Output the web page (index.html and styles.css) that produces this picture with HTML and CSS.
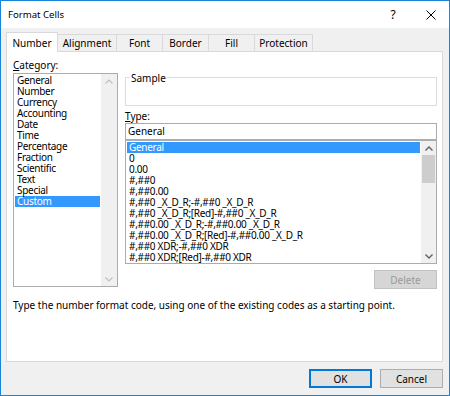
FILE: index.html
```html
<!DOCTYPE html>
<html>
<head>
<meta charset="utf-8">
<link rel="stylesheet" href="styles.css">
</head>
<body>
<div class="window">
  <div class="titlebar">
    <span class="title">Format Cells</span>
    <span class="help">?</span>
    <span class="close"><svg width="10" height="10" viewBox="0 0 10 10"><path d="M0.5 0.5L9.5 9.5M9.5 0.5L0.5 9.5" stroke="#000" stroke-width="1" fill="none"/></svg></span>
  </div>
  <div class="tabs">
    <div class="tab active tab-number">Number</div>
    <div class="tab tab-alignment">Alignment</div>
    <div class="tab">Font</div>
    <div class="tab">Border</div>
    <div class="tab">Fill</div>
    <div class="tab tab-protection">Protection</div>
  </div>
  <div class="panel">
    <div class="columns">
      <div class="left">
        <div class="label"><u>C</u>ategory:</div>
        <div class="listbox cat">
          <div class="items">
            <div class="item">General</div>
            <div class="item">Number</div>
            <div class="item">Currency</div>
            <div class="item">Accounting</div>
            <div class="item">Date</div>
            <div class="item">Time</div>
            <div class="item">Percentage</div>
            <div class="item">Fraction</div>
            <div class="item">Scientific</div>
            <div class="item">Text</div>
            <div class="item">Special</div>
            <div class="item sel">Custom</div>
          </div>
          <div class="scrollbar disabled">
            <div class="sb-btn"><svg width="8" height="5" viewBox="0 0 8 5"><path d="M0.5 4.5L4 1L7.5 4.5" fill="none" stroke="currentColor" stroke-width="1.2"/></svg></div>
            <div class="sb-track"></div>
            <div class="sb-btn"><svg width="8" height="5" viewBox="0 0 8 5"><path d="M0.5 0.5L4 4L7.5 0.5" fill="none" stroke="currentColor" stroke-width="1.2"/></svg></div>
          </div>
        </div>
      </div>
      <div class="right">
        <div class="sample"><span class="legend">Sample</span></div>
        <div class="label type-label"><u>T</u>ype:</div>
        <div class="input">General</div>
        <div class="listbox types">
          <div class="items">
            <div class="item sel">General</div>
            <div class="item">0</div>
            <div class="item">0.00</div>
            <div class="item">#,##0</div>
            <div class="item">#,##0.00</div>
            <div class="item">#,##0 _X_D_R;-#,##0 _X_D_R</div>
            <div class="item">#,##0 _X_D_R;[Red]-#,##0 _X_D_R</div>
            <div class="item">#,##0.00 _X_D_R;-#,##0.00 _X_D_R</div>
            <div class="item">#,##0.00 _X_D_R;[Red]-#,##0.00 _X_D_R</div>
            <div class="item">#,##0 XDR;-#,##0 XDR</div>
            <div class="item">#,##0 XDR;[Red]-#,##0 XDR</div>
          </div>
          <div class="scrollbar">
            <div class="sb-btn"><svg width="8" height="5" viewBox="0 0 8 5"><path d="M0.5 4.5L4 1L7.5 4.5" fill="none" stroke="currentColor" stroke-width="1.4"/></svg></div>
            <div class="sb-track"><div class="sb-thumb"></div></div>
            <div class="sb-btn"><svg width="8" height="5" viewBox="0 0 8 5"><path d="M0.5 0.5L4 4L7.5 0.5" fill="none" stroke="currentColor" stroke-width="1.4"/></svg></div>
          </div>
        </div>
        <div class="actions"><button class="btn" disabled>Delete</button></div>
      </div>
    </div>
    <p class="desc">Type the number format code, using one of the existing codes as a starting point.</p>
  </div>
  <div class="footer">
    <button class="btn default">OK</button>
    <button class="btn">Cancel</button>
  </div>
</div>
</body>
</html>
```

FILE: styles.css
```css
* { box-sizing: border-box; }
html, body { margin: 0; padding: 0; background: #fff; }
body {
  font-family: "Noto Sans", "Open Sans", sans-serif;
  font-size: 10px;
  color: #000;
}
.window {
  width: 450px;
  height: 396px;
  border: 1px solid #1883d7;
  background: #f0f0f0;
  display: flex;
  flex-direction: column;
}
.titlebar {
  height: 27px;
  background: #fff;
  display: flex;
  align-items: center;
  padding-left: 7px;
}
.title { font-size: 9.6px; flex: 1; }
.help { width: 10px; text-align: center; font-size: 12px; margin-right: 28px; }
.close { width: 10px; height: 10px; margin-right: 13px; display: flex; }
.tabs {
  height: 23px;
  display: flex;
  align-items: flex-end;
  padding-left: 5px;
}
.tab {
  width: 47px;
  height: 17px;
  border: 1px solid #d9d9d9;
  border-bottom: none;
  margin-left: -1px;
  background: #f0f0f0;
  display: flex;
  align-items: center;
  justify-content: center;
  line-height: 1;
  white-space: nowrap;
}
.tab:first-child { margin-left: 0; }
.tab-number { width: 52px; }
.tab-alignment { width: 60px; }
.tab-protection { width: 59px; }
.tab.active {
  height: 20px;
  margin-bottom: -1px;
  background: #fff;
  position: relative;
  z-index: 1;
}
.panel {
  margin: 0 6px 0 5px;
  height: 311px;
  background: #fff;
  border: 1px solid #d9d9d9;
  padding: 7px 5px 0 6px;
}
.columns { display: flex; gap: 7px; }
.left { width: 105px; display: flex; flex-direction: column; }
.right { width: 312px; display: flex; flex-direction: column; }
.label { line-height: 13px; height: 13px; margin-bottom: 1px; }
.listbox {
  border: 1px solid #acacac;
  display: flex;
  background: #fff;
}
.listbox.cat { height: 214px; }
.listbox.types { height: 124px; }
.items { flex: 1; padding: 1px; min-width: 0; }
.item {
  height: 11px;
  line-height: 11px;
  padding-left: 2px;
  white-space: nowrap;
  letter-spacing: -0.3px;
}
.item.sel { background: #3399ff; color: #fff; }
.scrollbar {
  width: 15px;
  background: #f0f0f0;
  display: flex;
  flex-direction: column;
  color: #606060;
}
.scrollbar.disabled { color: #c0c0c0; width: 16px; }
.sb-btn { height: 14px; display: flex; align-items: center; justify-content: center; }
.sb-track { flex: 1; }
.sb-thumb { height: 28px; background: #cdcdcd; margin: 0 1px; }
.sample {
  margin-top: 18px;
  height: 29px;
  border: 1px solid #dcdcdc;
  position: relative;
}
.legend {
  position: absolute;
  left: 4px;
  top: -5px;
  background: #fff;
  padding: 0 1px;
  line-height: 11px;
}
.type-label { margin-top: 4px; margin-bottom: 0; }
.input {
  height: 17px;
  border: 1px solid #acacac;
  line-height: 15px;
  padding-left: 2px;
}
.actions { display: flex; justify-content: flex-end; margin-top: 6px; }
.btn {
  font-family: inherit;
  font-size: 10px;
  width: 63px;
  height: 19px;
  border: 1px solid #adadad;
  background: #e1e1e1;
  color: #000;
  padding: 0;
  margin: 0;
}
.btn:disabled { background: #d6d6d6; border-color: #c2c2c2; color: #9a9a9a; }
.btn.default { border-color: #0078d7; box-shadow: inset 0 0 0 1px #0078d7; }
.desc { margin: 10px 0 0 0; line-height: 13px; }
.footer {
  display: flex;
  justify-content: flex-end;
  gap: 8px;
  padding: 7px 6px 0 0;
}
```
